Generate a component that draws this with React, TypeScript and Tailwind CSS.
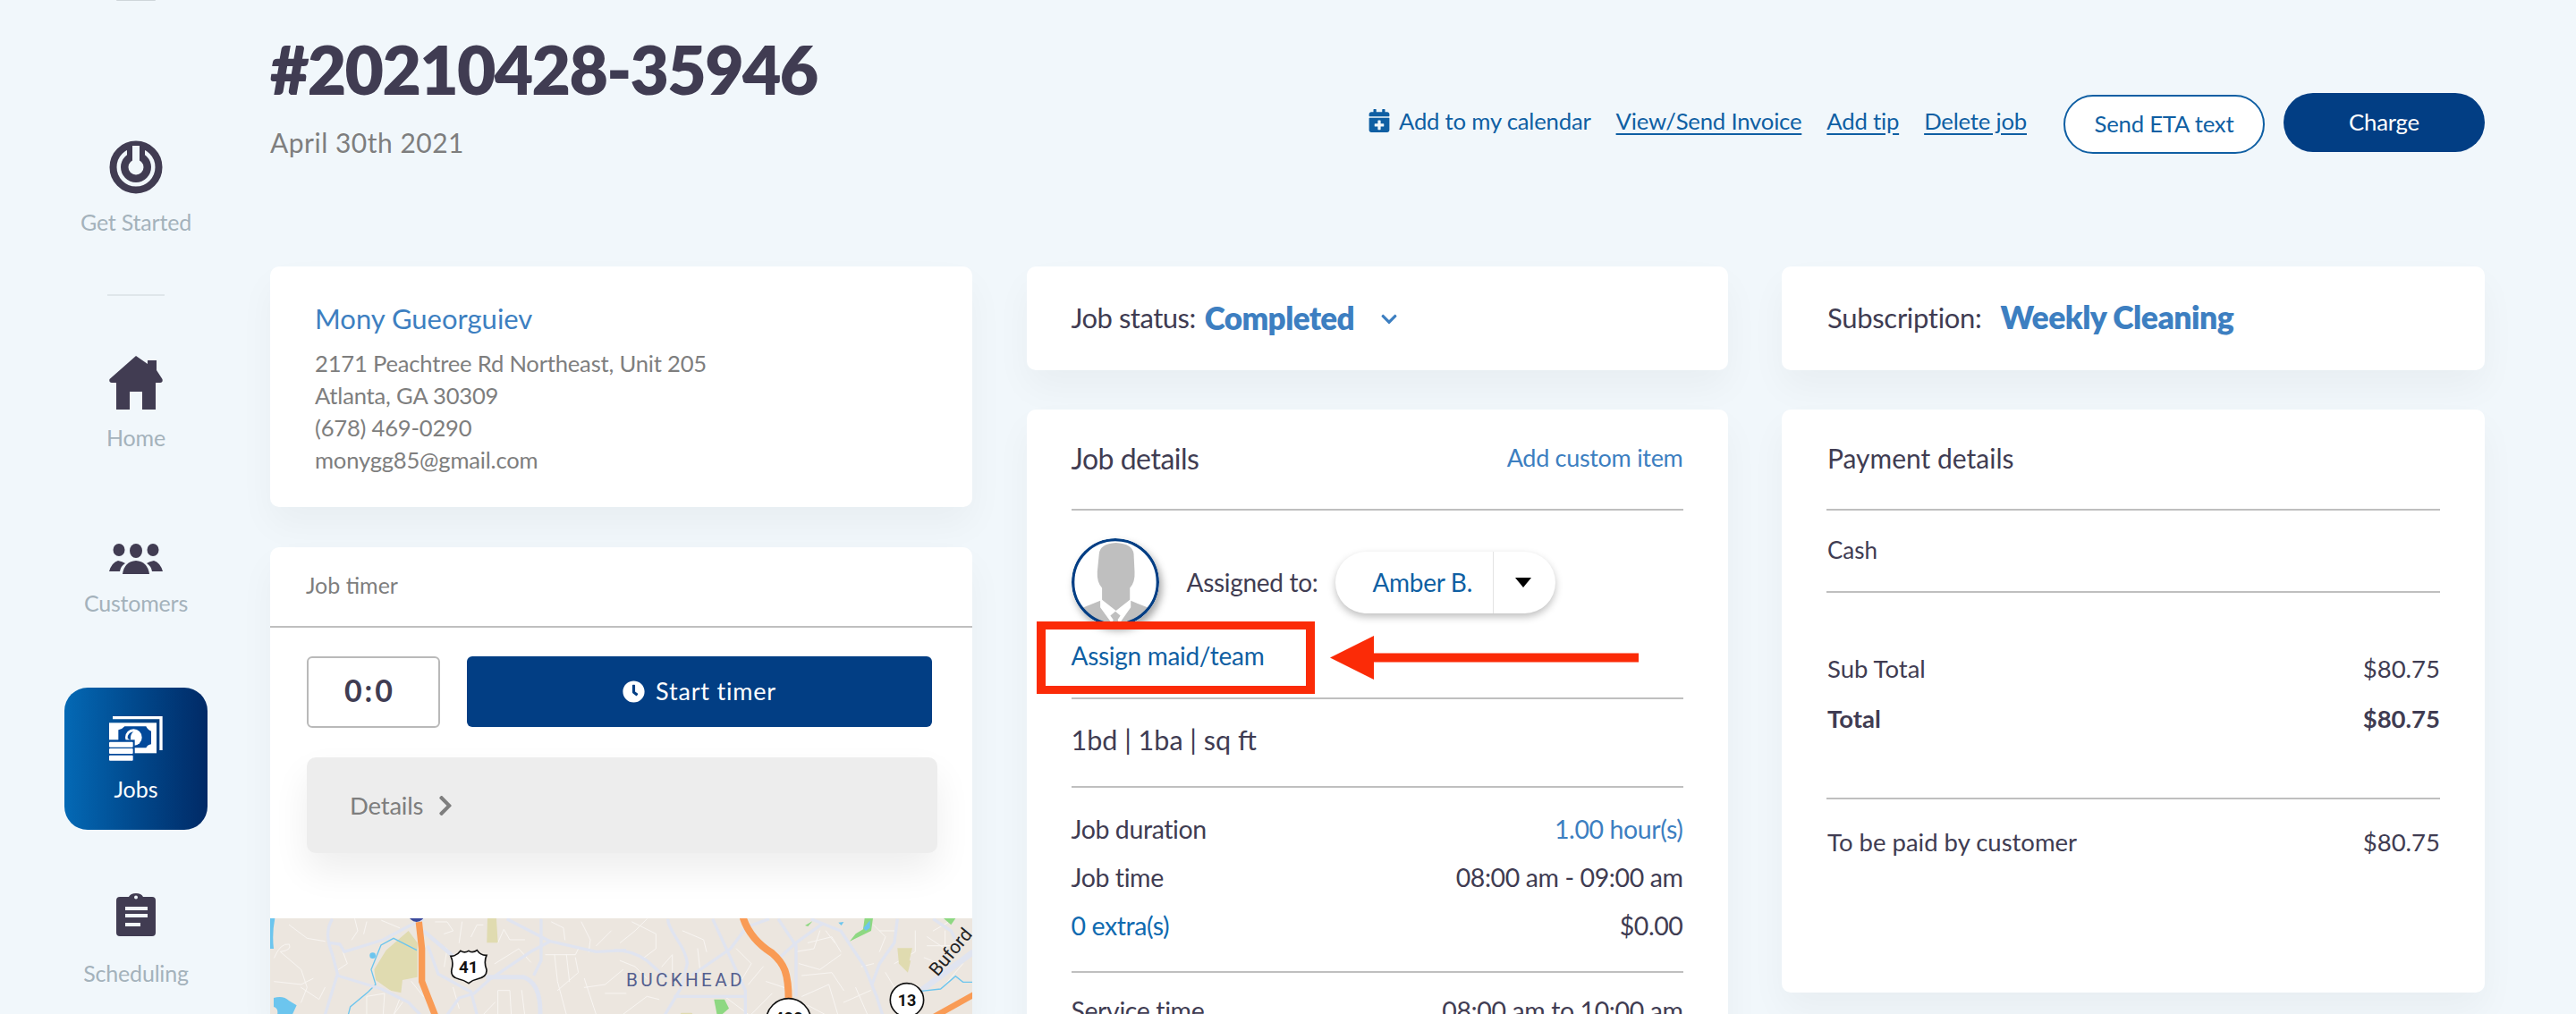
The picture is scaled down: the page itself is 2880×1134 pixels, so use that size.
import React from "react";
import { FaClock, FaCalendarPlus, FaChevronRight, FaChevronDown } from "react-icons/fa";

const PowerIcon = () => (
  <svg width="60" height="60" viewBox="0 0 60 60">
    <circle cx="30" cy="30" r="25.5" fill="none" stroke="#413c52" strokeWidth="8" />
    <circle cx="30" cy="30" r="17" fill="#413c52" />
    <rect x="20" y="4" width="20" height="16" fill="#413c52" />
    <circle cx="30" cy="30" r="8.5" fill="#f1f7fb" />
    <rect x="26" y="6" width="8" height="22" fill="#f1f7fb" />
  </svg>
);

const HomeIcon = () => (
  <svg width="60" height="60" viewBox="0 0 60 60">
    <path d="M30 0L43 9V5H53V16L59.5 26Q60.5 30 57 30H52V60H37V40H23V60H8V30H3Q-0.5 30 0.5 26Z" fill="#413c52" />
  </svg>
);

const UsersIcon = () => (
  <svg width="60" height="34" viewBox="0 0 60 34">
    <ellipse cx="11" cy="7" rx="6.5" ry="7" fill="#413c52" />
    <ellipse cx="30" cy="8" rx="7" ry="8" fill="#413c52" />
    <ellipse cx="49" cy="7" rx="6.5" ry="7" fill="#413c52" />
    <path d="M15 34Q17 20 30 19Q43 20 45 34Z" fill="#413c52" />
    <path d="M0 31Q3 21 10 19Q15 20 18 22Q13 25 12 31Z" fill="#413c52" />
    <path d="M60 31Q57 21 50 19Q45 20 42 22Q47 25 48 31Z" fill="#413c52" />
  </svg>
);

const MoneyIcon = () => (
  <svg width="60" height="50" viewBox="66 66 180 150">
    <path d="M78 66H245V180H235V76H78Z" fill="#fff" />
    <rect x="66" y="88" width="159" height="102" fill="#fff" />
    <path d="M97 112Q112 108 118 100H190Q195 112 207 116V160Q195 162 190 172H97Z" fill="#02499a" />
    <circle cx="148" cy="137" r="28" fill="#fff" />
    <path d="M128 140Q128 120 148 118Q136 126 138 146Z" fill="#02499a" />
    <rect x="60" y="145" width="92" height="75" fill="#02499a" />
    <rect x="66" y="152" width="80" height="18" rx="3" fill="#fff" />
    <rect x="66" y="174" width="80" height="18" rx="3" fill="#fff" />
    <rect x="66" y="197" width="80" height="18" rx="3" fill="#fff" />
  </svg>
);

const ClipboardIcon = () => (
  <svg width="44" height="48" viewBox="0 0 44 48">
    <path d="M4 4H14Q16 0 22 0Q28 0 30 4H40Q44 4 44 8V44Q44 48 40 48H4Q0 48 0 44V8Q0 4 4 4Z" fill="#413c52" />
    <circle cx="22" cy="4.5" r="2" fill="#f1f7fb" />
    <rect x="10" y="15" width="25" height="4" fill="#f1f7fb" />
    <rect x="10" y="23" width="25" height="4" fill="#f1f7fb" />
    <rect x="10" y="33" width="17" height="4" fill="#f1f7fb" />
  </svg>
);

const AvatarArt = () => (
  <svg width="98" height="98" viewBox="25 37 296 296" className="rounded-full shadow-[3px_5px_8px_rgba(0,0,0,0.35)]">
    <defs>
      <clipPath id="avatarClip">
        <circle cx="173" cy="185" r="143" />
      </clipPath>
    </defs>
    <circle cx="173" cy="185" r="143" fill="#fff" />
    <g clipPath="url(#avatarClip)" fill="#bfbfbf">
      <path d="M118 90Q120 55 175 52Q232 55 235 90L238 150Q240 185 222 205L222 245L175 282L128 245L128 205Q110 185 112 150Z" />
      <path d="M62 272L122 248V270L158 320V340H70Z" />
      <path d="M285 272L225 248V270L190 320V340H277Z" />
      <path d="M173 284L190 298L181 312L190 340H157L166 312L156 298Z" />
    </g>
    <circle cx="173" cy="185" r="143" fill="none" stroke="#023e84" strokeWidth="10" />
  </svg>
);

const minorA = [
  "M20 150Q40 100 70 105Q80 125 40 130L110 190L130 250L110 300",
  "M70 40L130 85L190 95","M290 20L300 60L280 90","M330 30L320 70","M380 25L440 50",
  "M250 130L265 170L235 190","M20 230L110 240L150 220","M110 250L170 290L190 250",
  "M400 130L415 170L390 210L410 260","M330 342L330 280L390 270L385 342","M420 342L440 290",
  "M560 30L600 30L620 60L590 70","M680 80L700 40L720 40","M650 30L640 100",
  "M770 100L790 55L810 90L860 90","M760 170L840 120L880 165","M560 100L600 120L590 180",
  "M770 342L770 260L810 260L815 342","M850 260L860 342","M930 140L1030 140L1040 120",
  "M960 140L970 230L1000 342","M1000 140L1010 230","M1030 150L1040 200L970 260","M1060 220L1100 342",
  "M1050 30L1080 90L1075 130","M950 30L990 50L995 90","M1150 60L1100 110","M1130 270L1200 270",
  "M1060 250L1130 240L1190 190","M480 230L520 280","M620 250L640 320","M450 300L420 342","M760 300L720 342",
];
const minorB = [
  "M10 100L60 60L100 20","M50 30L130 70L130 120L90 150","M220 60L290 90L300 130","M150 180L185 140V200",
  "M20 340L100 280L140 290","M10 160L60 180L100 220","M400 120L450 170L420 220L360 250","M270 120L280 210",
  "M440 240L490 180","M450 340L520 270","M610 170L680 190L750 140","M620 210L720 200L760 260","M640 100L720 80L750 130",
  "M620 280L710 240L740 340","M800 250L840 342","M760 300L850 260","M700 60L730 100","M860 40L900 80L880 130",
  "M880 60L930 60","M1040 80L1100 120L1100 60","M1040 110L1140 110","M1060 60L1130 20","M1030 150L1080 170",
  "M930 170L1000 130L1000 60","M900 200L930 250","M640 310L700 342","M360 280L440 340","M500 230L560 250",
  "M600 130L660 120L680 60","M820 180L860 170","M1100 240L1160 170",
];

const MapArt = () => (
  <svg width="785" height="120" viewBox="0 0 785 120" className="block">
    <rect width="785" height="120" fill="#ece6df" />
    <g transform="translate(-2 -6) scale(0.3333)">
      <g fill="none" stroke="#f8f5f2" strokeWidth="3" strokeLinecap="round" strokeLinejoin="round">
        {minorA.map((d) => <path key={d} d={d} />)}
      </g>
      <path d="M470 60L500 100V215L450 225L445 268L410 260L360 225L355 190L395 125Z" fill="#e0dbb0" />
      <path d="M735 18H765L770 100H733Z" fill="#e0dbb0" />
      <path d="M6 18H22Q12 70 18 120H6Z" fill="#6cc5ee" />
      <path d="M18 285Q50 275 70 295L95 310L80 342H30Q35 320 18 315Z" fill="#6cc5ee" />
      <circle cx="350" cy="143" r="10" fill="#6cc5ee" />
      <path d="M498 125L420 85L378 108L345 190L360 240L335 265L275 315L268 342" fill="none" stroke="#6cc5ee" strokeWidth="4" />
      <g fill="none" stroke="#e0e4f0" strokeLinejoin="round" strokeWidth="10">
        <path d="M215 20C190 60 200 100 215 140L232 205L190 342" />
        <path d="M205 100L240 105L255 130L385 90L470 45L520 20" />
        <path d="M232 210L380 255L470 300L510 342" />
        <path d="M535 110L570 205L680 265L700 342" />
        <path d="M600 342L640 285L690 270L740 225L880 130L945 95L1100 130L1200 125" />
        <path d="M800 20L945 95" />
        <path d="M915 20V160L890 210" />
        <path d="M520 60L620 145" strokeWidth="13" />
        <path d="M730 215H855Q915 235 912 342" strokeWidth="15" />
      </g>
      <path d="M505 30L515 120V230L560 345" fill="none" stroke="#f99b55" strokeWidth="22" />
      <circle cx="497" cy="3" r="27" fill="#3b4a9c" />
      <path d="M612 145Q632 145 645 127Q658 136 672 127Q686 136 700 125Q712 143 732 142Q722 165 732 190Q735 215 700 222Q685 225 672 236Q655 225 640 222Q610 215 615 190Q622 165 612 145Z" fill="#fff" stroke="#111" strokeWidth="5" />
      <text x="671" y="202" textAnchor="middle" fontSize="56" fontWeight="700" fill="#111" fontFamily="Roboto, sans-serif">41</text>
    </g>
    <g transform="translate(388 -6) scale(0.3333)">
      <g fill="none" stroke="#f8f5f2" strokeWidth="3" strokeLinecap="round" strokeLinejoin="round">
        {minorB.map((d) => <path key={d} d={d} />)}
      </g>
      <path d="M830 18H858L852 60L780 95L800 70L825 55Z" fill="#8ed882" />
      <path d="M826 50L848 25V50L834 60Z" fill="#6cc5ee" />
      <path d="M630 42L655 28L640 45Z" fill="#8ed882" />
      <path d="M1095 18H1135L1120 40Z" fill="#8ed882" />
      <path d="M940 118H990L980 160H985L975 200L945 170Z" fill="#e0dbb0" />
      <path d="M325 290H360L375 320L350 342H335Z" fill="#8ed882" />
      <path d="M215 335H250L255 342H210Z" fill="#e0dbb0" />
      <path d="M742 32L760 30L752 42Z" fill="#6cc5ee" />
      <g fill="none" stroke="#e0e4f0" strokeLinejoin="round" strokeWidth="10">
        <path d="M170 20C170 60 230 110 235 170L215 250L160 342" />
        <path d="M-10 125Q50 125 100 160L165 220" />
        <path d="M440 40L380 120L250 210" />
        <path d="M320 20L380 150L430 260V342" />
        <path d="M190 280H430" />
        <path d="M540 20L600 110V280" />
        <path d="M545 150L600 100L690 35" />
        <path d="M440 45L510 20" />
        <path d="M650 20L750 60L830 180L870 280L890 342" />
        <path d="M940 20L930 100L880 170L855 240" />
        <path d="M1060 20L1120 60L1150 120" />
      </g>
      <path d="M1020 260L1195 130" fill="none" stroke="#e0e4f0" strokeWidth="20" />
      <path d="M1020 262L1085 255L1135 212L1160 232H1195" fill="none" stroke="#6cc5ee" strokeWidth="4" />
      <path d="M422 15C440 70 480 110 520 135C560 170 575 200 575 295" fill="none" stroke="#f99b55" strokeWidth="24" />
      <path d="M1060 350L1200 272" fill="none" stroke="#f99b55" strokeWidth="20" />
      <circle cx="575" cy="362" r="75" fill="#fff" stroke="#111" strokeWidth="5" />
      <text x="575" y="372" textAnchor="middle" fontSize="56" fontWeight="700" fill="#111" fontFamily="Roboto, sans-serif">400</text>
      <circle cx="972" cy="292" r="56" fill="#fff" stroke="#111" strokeWidth="5" />
      <text x="972" y="312" textAnchor="middle" fontSize="54" fontWeight="700" fill="#111" fontFamily="Roboto, sans-serif">13</text>
      <text x="30" y="247" fontSize="62" letterSpacing="10" fill="#55608f" fontFamily="Roboto, sans-serif">BUCKHEAD</text>
      <text x="1075" y="215" fontSize="62" fill="#222" transform="rotate(-50 1075 215)" fontFamily="Roboto, sans-serif">Buford</text>
    </g>
  </svg>
);

function NavItem({ icon, label, className, labelGap }: { icon: React.ReactNode; label: string; className: string; labelGap: string }) {
  return (
    <div className={`flex w-[160px] flex-col items-center ${className}`}>
      <div className="flex items-center justify-center">{icon}</div>
      <span className={`text-[25px] leading-[32px] tracking-[-0.2px] text-[#a4b2bb] ${labelGap}`}>{label}</span>
    </div>
  );
}

function Row({ label, value, labelClass = "text-[#403c52]", valueClass = "text-[#403c52]" }: { label: string; value: string; labelClass?: string; valueClass?: string }) {
  return (
    <div className="flex h-[54px] items-center justify-between text-[28.5px] tracking-[-0.4px]">
      <span className={labelClass}>{label}</span>
      <span className={valueClass}>{value}</span>
    </div>
  );
}

function PayRow({ label, value, bold = false }: { label: string; value: string; bold?: boolean }) {
  return (
    <div className={`flex h-[56px] items-center justify-between text-[27.5px] text-[#403c52] ${bold ? "font-bold" : ""}`}>
      <span>{label}</span>
      <span>{value}</span>
    </div>
  );
}

export default function App() {
  return (
    <div className="flex h-[1134px] w-[2880px] overflow-hidden bg-[#f1f7fb] [font-family:Lato,sans-serif]">
      <aside className="flex w-[302px] shrink-0 flex-col items-center pl-[2px]">
        <div className="h-px w-[44px] rounded-b-full bg-[#cfd6da]" />
        <NavItem className="mt-[156px]" labelGap="mt-[15px]" icon={<PowerIcon />} label="Get Started" />
        <div className="mt-[65px] h-[2px] w-[64px] bg-[#dfe6ea]" />
        <NavItem className="mt-[67px]" labelGap="mt-[15px]" icon={<HomeIcon />} label="Home" />
        <NavItem className="mt-[103px]" labelGap="mt-[16px]" icon={<UsersIcon />} label="Customers" />
        <div className="mt-[79px] flex h-[159px] w-[160px] flex-col items-center rounded-[26px] bg-linear-to-r from-[#0469b5] to-[#012a66] pt-[32px]">
          <MoneyIcon />
          <span className="mt-[15px] text-[25px] leading-[32px] text-white">Jobs</span>
        </div>
        <NavItem className="mt-[71px]" labelGap="mt-[25px]" icon={<ClipboardIcon />} label="Scheduling" />
      </aside>

      <main className="min-w-0 flex-1">
        <header className="flex h-[298px] w-[2476px] items-start justify-between">
          <div>
            <h1 className="mt-[32px] text-[75px] font-extrabold leading-[90px] tracking-[-1.7px] text-[#403c52]">#20210428-35946</h1>
            <p className="mt-[17px] text-[30px] leading-[40px] tracking-[0.5px] text-[#7e7e7e]">April 30th 2021</p>
          </div>
          <div className="mt-[104px] flex items-center text-[25.7px] tracking-[-0.2px] text-[#0f5fa3]">
            <div className="mb-[6px] flex items-center">
              <FaCalendarPlus size={26} className="mr-[9px]" />
              <span>Add to my calendar</span>
              <span className="ml-[28px] underline underline-offset-4">View/Send Invoice</span>
              <span className="ml-[28px] underline underline-offset-4">Add tip</span>
              <span className="ml-[28px] underline underline-offset-4">Delete job</span>
            </div>
            <button className="ml-[41px] mt-[2px] h-[66px] w-[225px] rounded-full border-2 border-[#0f5fa3] bg-white pb-[2px] text-[25.7px] text-[#0f5fa3]">Send ETA text</button>
            <button className="ml-[21px] -mt-[2px] h-[66px] w-[225px] rounded-full bg-[#023e84] pb-[2px] text-[25.7px] text-white">Charge</button>
          </div>
        </header>

        <div className="grid w-[2476px] grid-cols-[785px_784px_786px] items-start gap-x-[60.5px]">
          <div className="flex flex-col gap-[45px]">
            <section className="h-[269px] rounded-[10px] bg-white px-[50px] pt-[38px] shadow-[0_20px_40px_rgba(0,0,0,0.04)]">
              <h2 className="text-[31px] leading-[40px] text-[#3d7fc1]">Mony Gueorguiev</h2>
              <div className="mt-[12px] text-[25.6px] leading-[36px] tracking-[-0.2px] text-[#7e7e7e]">
                <p>2171 Peachtree Rd Northeast, Unit 205</p>
                <p>Atlanta, GA 30309</p>
                <p>(678) 469-0290</p>
                <p>monygg85@gmail.com</p>
              </div>
            </section>
            <section className="rounded-[10px] bg-white shadow-[0_20px_40px_rgba(0,0,0,0.04)]">
              <div className="flex h-[90px] items-center border-b-2 border-[#bfbfbf] px-[40px] pb-[2px] text-[25px] text-[#7e7e7e]">Job timer</div>
              <div className="flex pl-[41px] pt-[32px]">
                <div className="flex h-[80px] w-[149px] items-center justify-center rounded-[6px] border-2 border-[#b9b9b9] pb-[6px] pr-[8px] text-[34px] font-bold tracking-[3px] text-[#403c52]">0:0</div>
                <button className="ml-[30px] flex h-[79px] w-[520px] items-center justify-center rounded-[6px] bg-[#023e84] text-[27px] tracking-[0.8px] text-white">
                  <FaClock size={25} className="mr-[12px]" />
                  Start timer
                </button>
              </div>
              <div className="ml-[41px] mt-[33px] flex h-[107px] w-[705px] items-center rounded-[10px] bg-[#ededed] pl-[48px] text-[#7e7e7e] shadow-[0_20px_40px_rgba(0,0,0,0.07)]">
                <span className="text-[27.5px] tracking-[-0.2px]">Details</span>
                <FaChevronRight size={26} className="ml-[12px]" />
              </div>
              <div className="mt-[73px] overflow-hidden">
                <MapArt />
              </div>
            </section>
          </div>

          <div className="flex flex-col gap-[44px]">
            <section className="flex h-[116px] items-center rounded-[10px] bg-white px-[50px] pb-[2px] shadow-[0_20px_40px_rgba(0,0,0,0.04)]">
              <span className="text-[31px] tracking-[-0.5px] text-[#403c52]">Job status:</span>
              <span className="ml-[10px] text-[35px] font-extrabold tracking-[-0.6px] text-[#3d7fc1]">Completed</span>
              <FaChevronDown size={20} color="#3d7fc1" className="ml-[29px] mt-[4px]" />
            </section>
            <section className="rounded-[10px] bg-white px-[50px] shadow-[0_20px_40px_rgba(0,0,0,0.04)]">
              <div className="flex h-[113px] items-center justify-between border-b-2 border-[#bfbfbf] pb-[2px]">
                <span className="text-[32px] tracking-[-0.5px] text-[#403c52]">Job details</span>
                <span className="text-[27px] tracking-[-0.3px] text-[#3d7fc1]">Add custom item</span>
              </div>
              <div className="mt-[31px] flex items-center">
                <AvatarArt />
                <span className="ml-[31px] w-[145px] whitespace-nowrap text-[28px] tracking-[-0.3px] text-[#403c52]">Assigned to:</span>
                <div className="ml-[21px] flex h-[69px] w-[246px] items-center rounded-full bg-white text-[#0f5fa3] shadow-[0_4px_8px_rgba(0,0,0,0.25)]">
                  <span className="w-[176px] pl-[42px] text-[28px] tracking-[-0.3px]">Amber B.</span>
                  <div className="h-full w-px bg-[#e3e3e3]" />
                  <div className="ml-[24px] h-0 w-0 border-x-[9px] border-t-[11px] border-x-transparent border-t-black" />
                </div>
              </div>
              <div className="relative mt-[13px] h-[40px] text-[28px] leading-[40px] tracking-[-0.3px] text-[#0f5fa3]">
                Assign maid/team
                <div className="absolute left-[-39px] top-[-18px] h-[81px] w-[311px] border-x-[10px] border-y-[9px] border-[#fb2b07]" />
                <svg className="absolute left-[289px] top-[-2px]" width="345" height="49" viewBox="0 0 345 49">
                  <path d="M0 24.5L49 0V19.5H345V29.5H49V49Z" fill="#fb2b07" />
                </svg>
              </div>
              <div className="mt-[27px] flex h-[101px] items-start border-y-2 border-[#bfbfbf] pt-[25px] text-[30.5px] leading-[40px] text-[#403c52]">1bd | 1ba | sq ft</div>
              <div className="border-b-2 border-[#bfbfbf] pb-[24px] pt-[19px]">
                <Row label="Job duration" value="1.00 hour(s)" valueClass="text-[#3d7fc1]" />
                <Row label="Job time" value="08:00 am - 09:00 am" />
                <Row label="0 extra(s)" value="$0.00" labelClass="text-[#0f6ab0]" />
              </div>
              <div className="pt-[15px]">
                <Row label="Service time" value="08:00 am to 10:00 am" />
              </div>
            </section>
          </div>

          <div className="flex flex-col gap-[44px]">
            <section className="flex h-[116px] items-center rounded-[10px] bg-white px-[51px] pb-[2px] shadow-[0_20px_40px_rgba(0,0,0,0.04)]">
              <span className="text-[31px] tracking-[-0.3px] text-[#403c52]">Subscription:</span>
              <span className="ml-[21px] text-[35.5px] font-extrabold tracking-[-0.5px] text-[#3d7fc1]">Weekly Cleaning</span>
            </section>
            <section className="h-[652px] rounded-[10px] bg-white px-[50px] shadow-[0_20px_40px_rgba(0,0,0,0.04)]">
              <div className="flex h-[113px] items-center border-b-2 border-[#bfbfbf] pb-[2px] pl-[1px] text-[30px] text-[#403c52]">Payment details</div>
              <div className="flex h-[92px] items-center border-b-2 border-[#bfbfbf] pb-[2px] pl-[1px] text-[26px] text-[#403c52]">Cash</div>
              <div className="pl-[1px] pt-[57px]">
                <PayRow label="Sub Total" value="$80.75" />
                <PayRow label="Total" value="$80.75" bold />
              </div>
              <div className="mt-[60px] border-t-2 border-[#bfbfbf] pl-[1px]">
                <div className="flex h-[96px] items-center justify-between text-[27.5px] text-[#403c52]">
                  <span>To be paid by customer</span>
                  <span>$80.75</span>
                </div>
              </div>
            </section>
          </div>
        </div>
      </main>
    </div>
  );
}
